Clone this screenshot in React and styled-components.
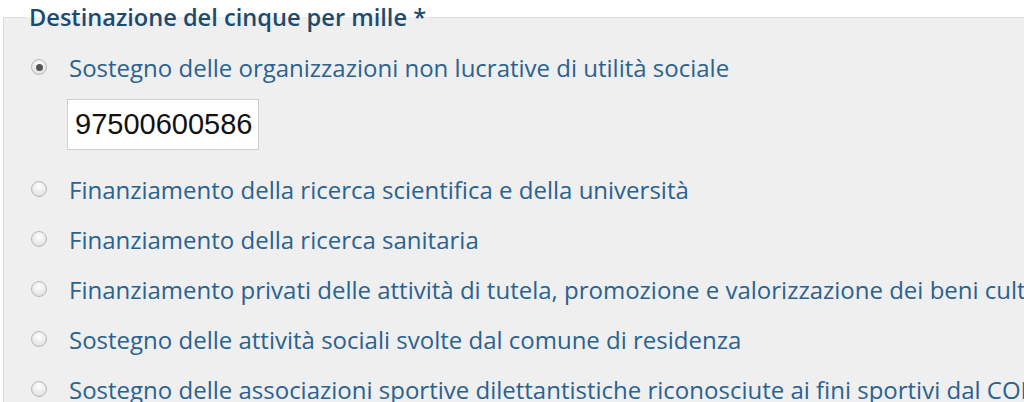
import styled, { createGlobalStyle } from "styled-components";

const GlobalStyle = createGlobalStyle`
  html, body {
    margin: 0;
    padding: 0;
    background: #fff;
    overflow: hidden;
  }
  body {
    font-family: "Open Sans", "Noto Sans", sans-serif;
  }
`;

const Fieldset = styled.fieldset`
  margin: 0 0 0 3px;
  padding: 8px 0 40px 0;
  width: 1300px;
  border: 1px solid #dcdcdc;
  border-right: none;
  background: #efefef;
  min-width: 0;
`;

const Legend = styled.legend`
  margin-left: 22px;
  padding: 0 3px;
  font-size: 23.6px;
  line-height: 34px;
  font-weight: 600;
  color: #1b4b70;
`;

const Option = styled.label`
  display: flex;
  align-items: center;
  height: 50px;
  padding-left: 27px;
  gap: 22px;
  white-space: nowrap;
  font-size: 24px;
  color: #2a6290;
  cursor: pointer;
`;

const Radio = styled.span`
  flex: none;
  width: 16px;
  height: 16px;
  border-radius: 50%;
  box-sizing: border-box;
  border: 1px solid #b9b9b9;
  background: radial-gradient(circle at 50% 35%, #ffffff 0%, #e4e4e4 70%, #d4d4d4 100%);
  display: flex;
  align-items: center;
  justify-content: center;

  &::after {
    content: "";
    width: 7px;
    height: 7px;
    border-radius: 50%;
    background: ${(p) => (p.$checked ? "#555" : "transparent")};
  }
`;

const CodeInput = styled.input`
  display: block;
  margin: 7px 0 14px 63px;
  width: 192px;
  height: 51px;
  box-sizing: border-box;
  border: 1px solid #cfcfcf;
  background: #fff;
  padding: 0 0 0 7px;
  font-family: "Liberation Sans", Arial, sans-serif;
  font-size: 29px;
  color: #111;
  outline: none;
`;

const options = [
  "Sostegno delle organizzazioni non lucrative di utilità sociale",
  "Finanziamento della ricerca scientifica e della università",
  "Finanziamento della ricerca sanitaria",
  "Finanziamento privati delle attività di tutela, promozione e valorizzazione dei beni culturali e paesaggistici",
  "Sostegno delle attività sociali svolte dal comune di residenza",
  "Sostegno delle associazioni sportive dilettantistiche riconosciute ai fini sportivi dal CONI",
];

export default function App() {
  return (
    <>
      <GlobalStyle />
      <Fieldset>
        <Legend>Destinazione del cinque per mille *</Legend>
        {options.map((text, i) => (
          <div key={i}>
            <Option>
              <Radio $checked={i === 0} />
              {text}
            </Option>
            {i === 0 && <CodeInput defaultValue="97500600586" readOnly />}
          </div>
        ))}
      </Fieldset>
    </>
  );
}
